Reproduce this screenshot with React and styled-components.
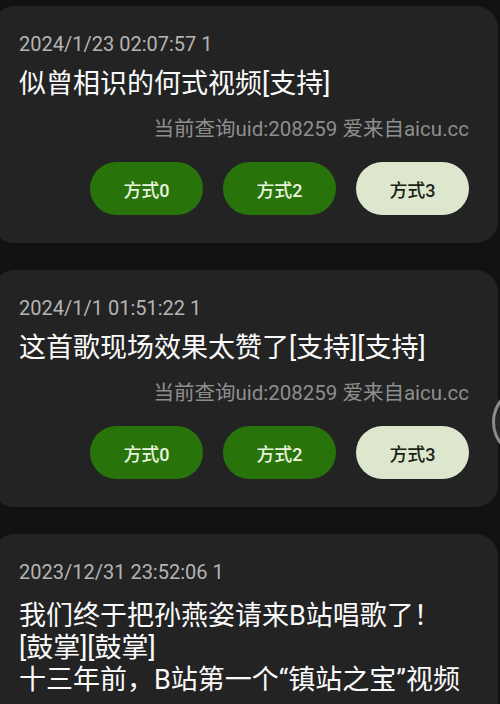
import React from 'react';
import styled, { createGlobalStyle } from 'styled-components';

const GlobalStyle = createGlobalStyle`
  html, body {
    margin: 0;
    padding: 0;
    background: #111111;
    overflow: hidden;
  }
  body {
    font-family: Roboto, 'Noto Sans CJK SC', sans-serif;
    -webkit-font-smoothing: antialiased;
  }
`;

const List = styled.div`
  display: flex;
  flex-direction: column;
  gap: 27px;
  padding-top: 6px;
`;

const Card = styled.div`
  background: #232323;
  border-radius: 22px;
  margin: 0 2px 0 -8px;
  padding: 24px 29px 28px 27px;
`;

const DateLine = styled.div`
  font-size: 20px;
  line-height: 28px;
  color: #b4b4b4;
`;

const Content = styled.div`
  margin-top: ${p => (p.$lower ? '14px' : '10px')};
  font-size: 27px;
  line-height: 32px;
  color: #fafafa;
  white-space: pre-wrap;
`;

const Meta = styled.div`
  margin-top: 15px;
  text-align: right;
  font-size: 20.5px;
  line-height: 28px;
  color: #8e8e8e;
`;

const Actions = styled.div`
  display: flex;
  justify-content: flex-end;
  gap: 20px;
  margin-top: 19px;
`;

const ModeButton = styled.button`
  width: 113px;
  height: 53px;
  border: none;
  border-radius: 27px;
  font-family: Roboto, 'Noto Sans CJK SC', sans-serif;
  font-size: 18px;
  font-weight: 500;
  background: ${p => (p.$light ? '#dce7cd' : '#28740a')};
  color: ${p => (p.$light ? '#1b1d17' : '#e9f3de')};
`;

const ScrollHandle = styled.div`
  position: fixed;
  top: 386px;
  right: -64px;
  width: 66px;
  height: 66px;
  border-radius: 50%;
  border: 3px solid #8c8c8c;
  background: #262626;
`;

const comments = [
  {
    date: '2024/1/23 02:07:57 1',
    text: '似曾相识的何式视频[支持]',
  },
  {
    date: '2024/1/1 01:51:22 1',
    text: '这首歌现场效果太赞了[支持][支持]',
  },
  {
    date: '2023/12/31 23:52:06 1',
    text: '我们终于把孙燕姿请来B站唱歌了！\n[鼓掌][鼓掌]\n十三年前，B站第一个“镇站之宝”视频',
    long: true,
  },
];

const modes = [
  { label: '方式0' },
  { label: '方式2' },
  { label: '方式3', light: true },
];

const App = () => (
  <>
    <GlobalStyle />
    <List>
      {comments.map((c, i) => (
        <Card key={i}>
          <DateLine>{c.date}</DateLine>
          <Content $lower={c.long}>{c.text}</Content>
          <Meta>当前查询uid:208259 爱来自aicu.cc</Meta>
          <Actions>
            {modes.map(m => (
              <ModeButton key={m.label} $light={m.light}>
                {m.label}
              </ModeButton>
            ))}
          </Actions>
        </Card>
      ))}
    </List>
    <ScrollHandle />
  </>
);

export default App;
